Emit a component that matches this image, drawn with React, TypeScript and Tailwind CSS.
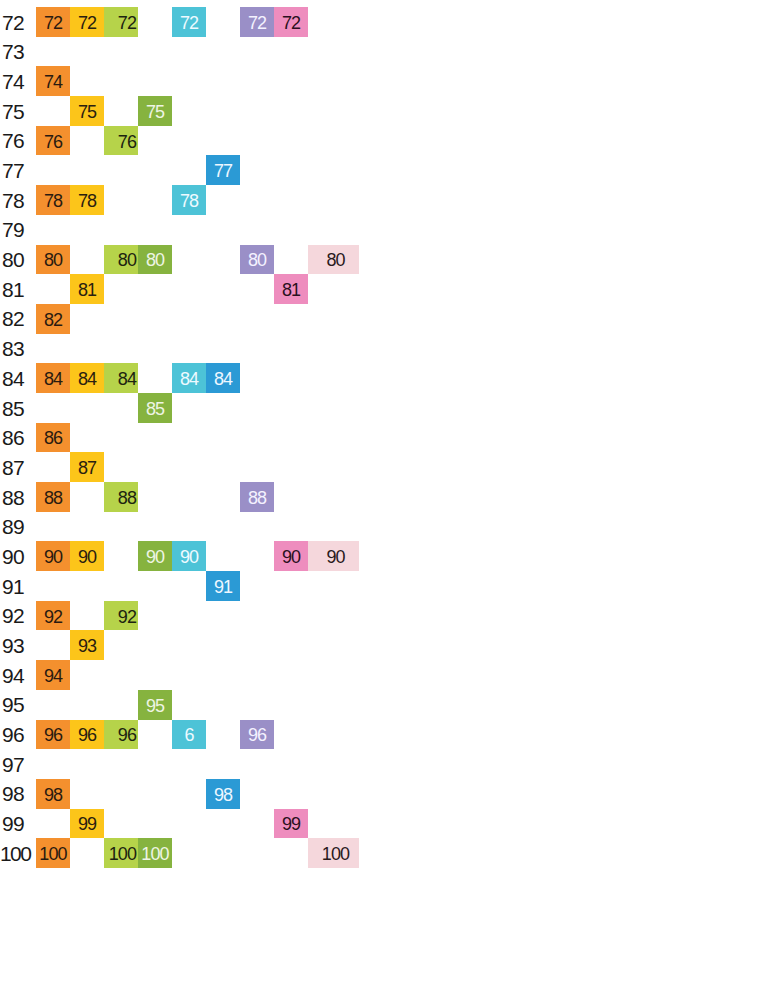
import React from "react";

// one column per divisor 2..10
const columns = [
  { d: 2, cls: "w-[34px] justify-center bg-[#f4902e] text-[#2a1a10]" },
  { d: 3, cls: "w-[34px] justify-center bg-[#fcc51a] text-[#2a2010]" },
  { d: 4, cls: "w-[34px] justify-end pr-[2px] bg-[#b6d34a] text-[#1c2410]" },
  { d: 5, cls: "w-[34px] justify-center bg-[#86b33f] text-[#eef5e4]" },
  { d: 6, cls: "w-[34px] justify-center bg-[#4dc3d7] text-[#eefaff]" },
  { d: 7, cls: "w-[34px] justify-center bg-[#2b9ad5] text-[#eef7ff]" },
  { d: 8, cls: "w-[34px] justify-center bg-[#9a8fc7] text-[#f4f2ff]" },
  { d: 9, cls: "w-[34px] justify-center bg-[#ee8dbe] text-[#2a1020]" },
  { d: 10, cls: "w-[51px] justify-center pl-1 bg-[#f5d7dc] text-[#2a1a1c]" },
];

const numbers = Array.from({ length: 29 }, (_, i) => 72 + i);

const cellText = (n: number, d: number) => (n === 96 && d === 6 ? "6" : String(n));

const Row = ({ n }: { n: number }) => (
  <div className="flex h-[29.7px] items-stretch">
    <div
      className={`flex w-[36px] items-center pt-[1px] text-[21px] text-[#1a1a1a] ${
        n < 100 ? "pl-[2px] tracking-[-0.8px]" : "tracking-[-1.6px]"
      }`}
    >
      {n}
    </div>
    {columns.map((c) =>
      n % c.d === 0 ? (
        <div key={c.d} className={`flex items-center pt-[3px] text-[18px] tracking-[-0.9px] ${c.cls}`}>
          {cellText(n, c.d)}
        </div>
      ) : (
        <div key={c.d} className={c.d === 10 ? "w-[51px]" : "w-[34px]"} />
      )
    )}
  </div>
);

const App = () => {
  return (
    <main className="min-h-[994px] w-[768px] bg-white pt-[7px] font-['Liberation_Sans',Arial,sans-serif]">
      <section className="flex flex-col">
        {numbers.map((n) => (
          <Row key={n} n={n} />
        ))}
      </section>
    </main>
  );
};

export default App;
